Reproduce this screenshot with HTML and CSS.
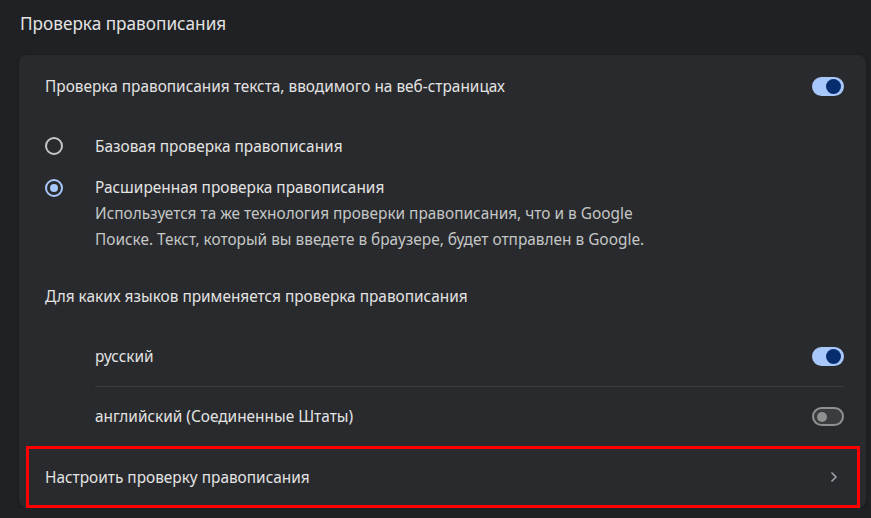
FILE: index.html
```
<!DOCTYPE html>
<html lang="ru">
<head>
    <meta charset="UTF-8">
    <title>Проверка правописания</title>
    <link rel="stylesheet" href="styles.css">
</head>
<body>
    <h2 class="page-title">Проверка правописания</h2>

    <div class="card">
        <div class="row row-main">
            <span>Проверка правописания текста, вводимого на веб-страницах</span>
            <span class="toggle on"><span class="knob"></span></span>
        </div>

        <div class="radio-group">
            <div class="radio-row">
                <span class="radio"></span>
                <div class="radio-label">Базовая проверка правописания</div>
            </div>
            <div class="radio-row multi">
                <span class="radio checked"></span>
                <div class="radio-label">
                    Расширенная проверка правописания
                    <div class="hint">Используется та же технология проверки правописания, что и в Google<br>Поиске. Текст, который вы введете в браузере, будет отправлен в Google.</div>
                </div>
            </div>
        </div>

        <div class="section-label">Для каких языков применяется проверка правописания</div>

        <div class="lang-list">
            <div class="lang-row">
                <span>русский</span>
                <span class="toggle on"><span class="knob"></span></span>
            </div>
            <div class="lang-row">
                <span>английский (Соединенные Штаты)</span>
                <span class="toggle"><span class="knob"></span></span>
            </div>
        </div>

        <div class="row link-row">
            <span>Настроить проверку правописания</span>
            <svg class="chevron" width="8" height="12" viewBox="0 0 8 12">
                <path d="M1.5 1.5 L6 6 L1.5 10.5" fill="none" stroke="#9aa0a6" stroke-width="1.6"/>
            </svg>
        </div>
    </div>
</body>
</html>
```

FILE: styles.css
```
body{
    margin: 0;
    background-color: #202124;
    color: #e3e3e3;
    font-family: 'Noto Sans', 'Open Sans', sans-serif;
    font-size: 15.4px;
}
.page-title{
    margin: 0;
    padding: 12px 20px 19px;
    font-size: 17.2px;
    font-weight: 400;
    line-height: 24px;
}
.card{
    margin: 0 5px 0 19px;
    background-color: #292a2d;
    border-radius: 8px;
    box-shadow: 0 1px 3px rgba(0, 0, 0, 0.35);
    padding-bottom: 0;
}
.row{
    display: flex;
    align-items: center;
    justify-content: space-between;
    padding: 0 22px 0 26px;
}
.row-main{
    height: 62px;
}

/* radio buttons */
.radio-group{
    padding: 9px 22px 0 26px;
}
.radio-row{
    display: flex;
    align-items: center;
    gap: 32px;
    height: 40px;
}
.radio-row.multi{
    align-items: flex-start;
    height: auto;
    padding-top: 9px;
    line-height: 26px;
}
.radio-row.multi .radio{
    margin-top: 4px;
}
.radio{
    width: 14px;
    height: 14px;
    border: 2px solid #c4c7c5;
    border-radius: 50%;
    flex-shrink: 0;
    position: relative;
}
.radio.checked{
    border-color: #a8c7fa;
}
.radio.checked::after{
    content: "";
    position: absolute;
    left: 3px;
    top: 3px;
    width: 8px;
    height: 8px;
    border-radius: 50%;
    background-color: #a8c7fa;
}
.hint{
    color: #c4c7c5;
}

.section-label{
    padding: 31px 22px 16px 26px;
    line-height: 26px;
}

/* languages */
.lang-list{
    padding: 0 22px 0 76px;
}
.lang-row{
    display: flex;
    align-items: center;
    justify-content: space-between;
    height: 60px;
}
.lang-row + .lang-row{
    border-top: 1px solid #3c3d40;
    height: 59px;
}

/* toggles */
.toggle{
    width: 26px;
    height: 15px;
    border: 2px solid #a8c7fa;
    border-radius: 10px;
    background-color: #a8c7fa;
    display: flex;
    align-items: center;
    justify-content: flex-end;
    padding: 0 1px;
    box-sizing: content-box;
}
.toggle .knob{
    width: 15px;
    height: 15px;
    border-radius: 50%;
    background-color: #062e6f;
}
.toggle:not(.on){
    background-color: #3b3c3f;
    border-color: #8e918f;
    justify-content: flex-start;
    padding: 0 3px;
    width: 22px;
}
.toggle:not(.on) .knob{
    width: 10px;
    height: 10px;
    background-color: #8e918f;
}

.link-row{
    height: 56px;
    margin: 0 6px 0 7px;
    border: 3px solid #ff0000;
    padding: 0 19px 0 16px;
}
.chevron{
    display: block;
}
```
